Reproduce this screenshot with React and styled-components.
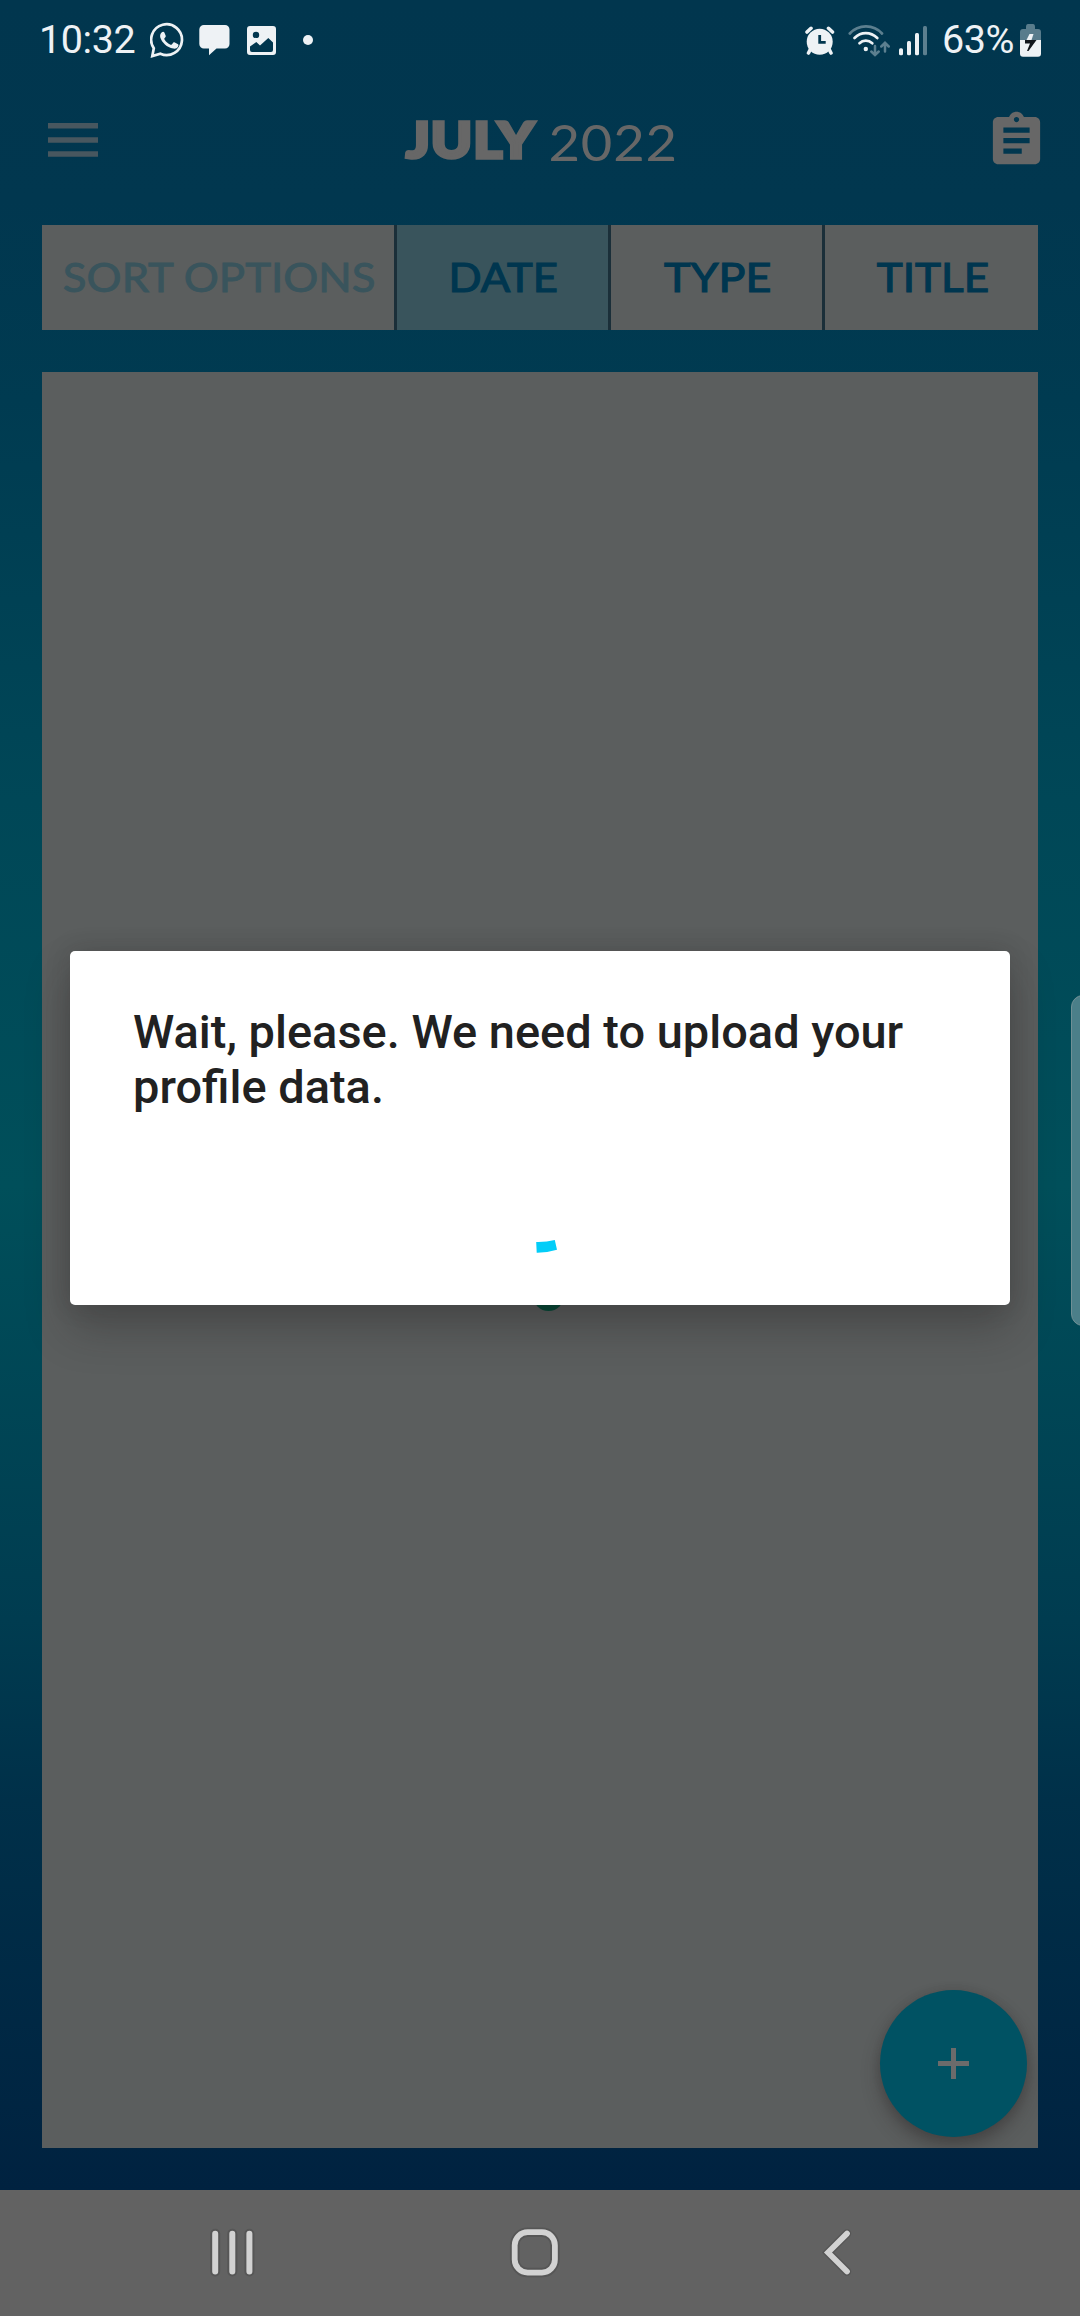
import React from 'react';
import styled, { createGlobalStyle } from 'styled-components';

const Global = createGlobalStyle`
  *, *::before, *::after { box-sizing: border-box; }
  body { margin: 0; background: #002240; }
  svg { display: block; flex: none; }
`;

const Screen = styled.div`
  position: relative;
  display: flex;
  flex-direction: column;
  width: 1080px;
  height: 2316px;
  overflow: hidden;
  font-family: Roboto, sans-serif;
`;

const Backdrop = styled.div`
  display: flex;
  flex-direction: column;
  height: 2190px;
  background: linear-gradient(
    180deg,
    #01364e 0px,
    #01374f 200px,
    #003b51 400px,
    #004757 800px,
    #004f5a 1185px,
    #003c50 1620px,
    #003049 1800px,
    #002240 2190px
  );
`;

const StatusBar = styled.div`
  display: flex;
  align-items: center;
  justify-content: space-between;
  height: 80px;
  padding: 0 39px 0 39px;
`;

const StatusGroup = styled.div`
  display: flex;
  align-items: center;
  height: 80px;
`;

const StatusText = styled.span`
  width: ${(p) => p.$width}px;
  margin-left: ${(p) => p.$gap || 0}px;
  font-size: 39.5px;
  line-height: 80px;
  letter-spacing: ${(p) => p.$track || 0}px;
  white-space: nowrap;
  color: #eef2f5;
`;

const StatusIcon = styled.svg`
  width: ${(p) => p.$width}px;
  height: 80px;
  margin-left: ${(p) => p.$gap || 0}px;
  fill: #eef2f5;
`;

const Header = styled.header`
  display: flex;
  align-items: center;
  height: 120px;
  padding: 0 32px 0 48px;
`;

const Title = styled.h1`
  display: flex;
  align-items: baseline;
  flex: 1;
  height: 120px;
  margin: 0 0 0 308px;
  font-family: Lato, sans-serif;
  font-weight: 400;
  line-height: 120px;
  color: #676767;
  white-space: nowrap;
`;

const Month = styled.span`
  width: 142px;
  font-size: 50px;
  font-weight: 900;
  letter-spacing: 0.8px;
  transform: translateY(-1px) scaleX(1.11);
  transform-origin: left center;
  -webkit-text-stroke: 3.4px #676767;
`;

const Year = styled.span`
  font-size: 51px;
  font-weight: 400;
  letter-spacing: 0.8px;
  transform: translate(0.5px, 2px) scaleX(1.065);
  transform-origin: left center;
`;

const SortBar = styled.div`
  display: grid;
  grid-template-columns: 352px 211px 211px 213px;
  gap: 3px;
  height: 105px;
  margin: 25px 42px 0;
  background: #1b2f39;
`;

const SortCell = styled.div`
  display: flex;
  align-items: center;
  justify-content: center;
  padding: 0 0 3px 2px;
  background: ${(p) => (p.$active ? '#39545c' : '#5b5e5e')};
  color: ${(p) => (p.$label ? '#39545c' : '#00364f')};
  font-family: Lato, sans-serif;
  font-size: 41.5px;
  font-weight: 400;
  line-height: 50px;
  white-space: nowrap;
  -webkit-text-stroke: ${(p) => (p.$label ? 0.9 : 1.2)}px currentColor;
`;

const SortText = styled.span`
  transform: scaleX(${(p) => p.$stretch});
`;

const Content = styled.main`
  position: relative;
  height: 1776px;
  margin: 42px 42px 0;
  background: #5b5e5e;
`;

const LoadingDot = styled.div`
  position: absolute;
  left: 490.5px;
  top: 907.5px;
  width: 31px;
  height: 31px;
  border-radius: 50%;
  background: #004a37;
`;

const Fab = styled.button`
  position: absolute;
  right: 11px;
  bottom: 11px;
  display: flex;
  align-items: center;
  justify-content: center;
  width: 147px;
  height: 147px;
  padding: 0;
  border: 0;
  border-radius: 50%;
  background: #005263;
  box-shadow: 0 10px 18px rgba(40, 36, 36, 0.4), 0 0 8px rgba(40, 36, 36, 0.15);
`;

const FabClip = styled.div`
  position: absolute;
  inset: 0;
  overflow: hidden;
`;

const NavBar = styled.nav`
  display: flex;
  align-items: center;
  height: 126px;
  padding-left: 204px;
  background: #626262;
`;

const HomeButton = styled.div`
  margin: 0 249px 0 242px;
`;

const DialogLayer = styled.div`
  position: absolute;
  left: 70px;
  top: 951px;
`;

const Dialog = styled.section`
  display: flex;
  flex-direction: column;
  justify-content: space-between;
  align-items: center;
  width: 940px;
  height: 354px;
  padding: 53px 63px 51px;
  border-radius: 5px;
  background: #fff;
  box-shadow: 0 24px 44px rgba(30, 26, 26, 0.28), 0 0 26px rgba(30, 26, 26, 0.16);
`;

const Message = styled.p`
  width: 814px;
  margin: 0;
  font-size: 46.95px;
  font-weight: 500;
  line-height: 55px;
  color: #212121;
`;

const EdgeHandle = styled.div`
  position: absolute;
  top: 995px;
  right: -15px;
  width: 24px;
  height: 331px;
  border: 1px solid #708f95;
  border-radius: 12px;
  background: #4b7f89;
`;

function WhatsAppIcon() {
  return (
    <StatusIcon $width={36} $gap={12} viewBox="0 0 36 80">
      <path
        d="M3.8 48.3A15.4 15.4 0 1 1 10.4 53.8L2.3 56.1Z"
        fill="none"
        stroke="#eef2f5"
        strokeWidth="2.7"
        strokeLinejoin="miter"
      />
      <path d="M11.6 32.4c1-1 2.4-.9 2.9.3l1.2 3c.3.8-.3 1.6-1.2 2.5-.4.4-.3.8 0 1.3 1.5 2.5 3.4 4 6 5.2.5.2.9.1 1.3-.3l1.4-1.7c.5-.5 1-.5 1.6-.2l2.8 1.4c.8.4 1 .9.8 1.9-.5 2.2-2.8 3.3-5.2 2.8-6.3-1.3-11.4-6.3-12.9-11.2-.5-1.9 0-3.8 1.3-5Z" />
    </StatusIcon>
  );
}

function ChatIcon() {
  return (
    <StatusIcon $width={31} $gap={13} viewBox="0 0 31 80">
      <path d="M5 25h21a4.5 4.5 0 0 1 4.5 4.5v14.5a4.5 4.5 0 0 1-4.5 4.5h-8.5L10 55.2v-6.7H5A4.5 4.5 0 0 1 .3 44V29.5A4.5 4.5 0 0 1 5 25Z" />
    </StatusIcon>
  );
}

function PictureIcon() {
  return (
    <StatusIcon $width={29} $gap={17} viewBox="0 0 29 80">
      <path
        fillRule="evenodd"
        d="M3 26h23a3 3 0 0 1 3 3v23a3 3 0 0 1-3 3H3a3 3 0 0 1-3-3V29a3 3 0 0 1 3-3ZM9 31.7a3.2 3.2 0 1 0 0 6.4 3.2 3.2 0 0 0 0-6.4ZM3 46.5V50q0 2 2 2h19q2 0 2-2v-7.5L21.3 38 13 45.5 9.3 42Z"
      />
    </StatusIcon>
  );
}

function DotIcon() {
  return (
    <StatusIcon $width={10} $gap={27} viewBox="0 0 10 80">
      <circle cx="5" cy="40" r="5" />
    </StatusIcon>
  );
}

function AlarmIcon() {
  return (
    <StatusIcon $width={30} viewBox="0 0 30 80">
      <g stroke="#eef2f5" strokeLinecap="round" strokeWidth="3.6">
        <path d="M2 32l4-3.7M27.5 32l-4-3.7M6 48l-2.5 5M23.5 48l2.5 5" />
      </g>
      <circle cx="14.7" cy="41.7" r="13" />
      <path d="M14.7 35v7.3h6" fill="none" stroke="#01364e" strokeWidth="2.8" />
    </StatusIcon>
  );
}

function WifiIcon() {
  return (
    <StatusIcon $width={42} $gap={13} viewBox="0 0 42 80">
      <g fill="none" stroke="#eef2f5" strokeLinecap="round" strokeWidth="2.7">
        <path d="M1.800 33.500C10.500 24 25.500 24 34 33.500" stroke="#5c7f8f" />
        <path d="M6.500 38C13 31.500 22.500 31.500 29.300 38" />
        <path d="M11.500 43.300C15 39.800 20.500 39.800 24.300 43.300" />
        <path
          d="M27 46v8.500M23.300 51.500l3.700 3.500 3.700-3.500M37 51.500V43M33.300 46.500l3.700-3.700 3.700 3.700"
          stroke="#5c7f8f"
          strokeWidth="2.5"
        />
      </g>
      <circle cx="17.8" cy="49" r="2.2" />
    </StatusIcon>
  );
}

function SignalIcon() {
  return (
    <StatusIcon $width={28} $gap={9} viewBox="0 0 28 80">
      <rect x="0" y="48.3" width="4" height="7" rx="1.5" />
      <rect x="8" y="41" width="4" height="14.3" rx="1.5" />
      <rect x="16" y="33" width="4" height="22.3" rx="1.5" />
      <rect x="24" y="26" width="4" height="29.3" rx="1.5" fill="#5c7f8f" />
    </StatusIcon>
  );
}

function BatteryIcon() {
  return (
    <StatusIcon $width={21} $gap={5} viewBox="0 0 21 80">
      <path d="M0 40v-8q0-3 3-3h3v-2q0-3 2-3h5q2 0 2 3v2h3q3 0 3 3v8Z" fill="#587c8c" />
      <path d="M0 40h21v13.5q0 3.2-3 3.2H3q-3 0-3-3.2Z" />
      <path d="M9.5 34h4l-2 6H6.5Z" />
      <path d="M5 40h11.5L8.5 51H7l3-7.500H5Z" fill="#11161c" />
    </StatusIcon>
  );
}

function MenuIcon() {
  return (
    <svg width="50" height="120" viewBox="0 0 50 120" fill="#48575f">
      <path d="M0 43h50v5.500H0zM0 57.200h50v5.600H0zM0 71.300h50v5.500H0z" />
    </svg>
  );
}

function ClipboardIcon() {
  return (
    <svg width="63" height="63" viewBox="0 0 24 24" fill="#676767">
      <path d="M19 3h-4.180C14.400 1.840 13.300 1 12 1c-1.300 0-2.400.84-2.820 2H5c-1.100 0-2 .9-2 2v14c0 1.100.9 2 2 2h14c1.100 0 2-.9 2-2V5c0-1.100-.9-2-2-2zm-7 0c.55 0 1 .45 1 1s-.45 1-1 1-1-.45-1-1 .45-1 1-1zm2 14H7v-2h7v2zm3-4H7v-2h10v2zm0-4H7V7h10v2z" />
    </svg>
  );
}

function RecentsIcon() {
  const d = 'M11.2 12.8v37.6M28.3 12.8v37.6M45.4 12.8v37.6';
  return (
    <svg width="56" height="64" viewBox="0 0 56 64" strokeLinecap="round" fill="none">
      <path d={d} stroke="#565656" strokeWidth="10" />
      <path d={d} stroke="#d2d2d2" strokeWidth="6" />
    </svg>
  );
}

function HomeIcon() {
  const shape = { x: 12.7, y: 11.2, width: 40.2, height: 40.4, rx: 13 };
  return (
    <svg width="64" height="64" viewBox="0 0 64 64" fill="none">
      <rect {...shape} stroke="#565656" strokeWidth="9.5" />
      <rect {...shape} stroke="#d2d2d2" strokeWidth="5.8" />
    </svg>
  );
}

function BackIcon() {
  const d = 'M32 12.600L13 31.400 32 50.500';
  return (
    <svg width="40" height="64" viewBox="0 0 40 64" fill="none" strokeLinecap="round">
      <path d={d} stroke="#565656" strokeWidth="8.5" />
      <path d={d} stroke="#d2d2d2" strokeWidth="5.7" />
    </svg>
  );
}

function Spinner() {
  return (
    <svg width="34" height="16" viewBox="-10 0 34 16">
      <path d="M3.200 4Q13 4.300 21.800 1.900L24 11.800Q14.500 14.800 3.700 14.700Z" fill="#03cdf8" />
    </svg>
  );
}

export default function App() {
  return (
    <Screen>
      <Global />
      <Backdrop>
        <StatusBar>
          <StatusGroup>
            <StatusText $width={99} $track={-0.4}>10:32</StatusText>
            <WhatsAppIcon />
            <ChatIcon />
            <PictureIcon />
            <DotIcon />
          </StatusGroup>
          <StatusGroup>
            <AlarmIcon />
            <WifiIcon />
            <SignalIcon />
            <StatusText $width={73} $gap={15} $track={-0.4}>63%</StatusText>
            <BatteryIcon />
          </StatusGroup>
        </StatusBar>
        <Header>
          <MenuIcon />
          <Title>
            <Month>JULY</Month>
            <Year>2022</Year>
          </Title>
          <ClipboardIcon />
        </Header>
        <SortBar>
          <SortCell $label>
            <SortText $stretch={1.055}>SORT OPTIONS</SortText>
          </SortCell>
          <SortCell $active>
            <SortText $stretch={1.05}>DATE</SortText>
          </SortCell>
          <SortCell>
            <SortText $stretch={1.08}>TYPE</SortText>
          </SortCell>
          <SortCell>
            <SortText $stretch={1.06}>TITLE</SortText>
          </SortCell>
        </SortBar>
        <Content>
          <LoadingDot />
          <FabClip>
            <Fab aria-label="Add">
              <svg width="31" height="31" viewBox="0 0 31 31" fill="#6b6b6b">
                <path d="M13 0h5v13h13v5H18v13h-5V18H0v-5h13z" />
              </svg>
            </Fab>
          </FabClip>
        </Content>
      </Backdrop>
      <NavBar>
        <RecentsIcon />
        <HomeButton>
          <HomeIcon />
        </HomeButton>
        <BackIcon />
      </NavBar>
      <DialogLayer>
        <Dialog>
          <Message>Wait, please. We need to upload your profile data.</Message>
          <Spinner />
        </Dialog>
      </DialogLayer>
      <EdgeHandle />
    </Screen>
  );
}
